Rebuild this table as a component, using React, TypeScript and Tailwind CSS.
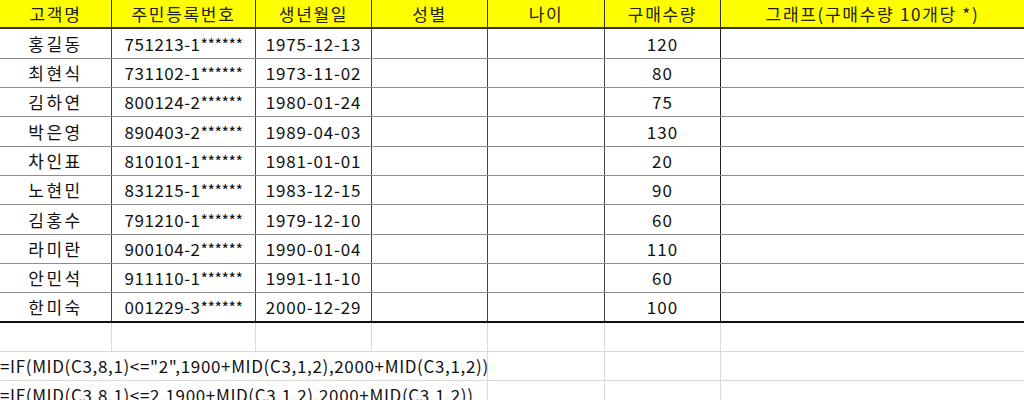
const rows = [
  { name: "홍길동", id: "751213-1", birth: "1975-12-13", qty: "120", tall: true },
  { name: "최현식", id: "731102-1", birth: "1973-11-02", qty: "80", tall: false },
  { name: "김하연", id: "800124-2", birth: "1980-01-24", qty: "75", tall: false },
  { name: "박은영", id: "890403-2", birth: "1989-04-03", qty: "130", tall: true },
  { name: "차인표", id: "810101-1", birth: "1981-01-01", qty: "20", tall: false },
  { name: "노현민", id: "831215-1", birth: "1983-12-15", qty: "90", tall: false },
  { name: "김홍수", id: "791210-1", birth: "1979-12-10", qty: "60", tall: true },
  { name: "라미란", id: "900104-2", birth: "1990-01-04", qty: "110", tall: false },
  { name: "안민석", id: "911110-1", birth: "1991-11-10", qty: "60", tall: false },
  { name: "한미숙", id: "001229-3", birth: "2000-12-29", qty: "100", tall: true },
];

const headers = ["고객명", "주민등록번호", "생년월일", "성별", "나이", "구매수량", "그래프(구매수량 10개당 *)"];

const grid = "grid grid-cols-[112px_144px_116px_116px_117px_116px_1fr]";

const App = () => {
  return (
    <div
      className="w-[1024px] h-[400px] overflow-hidden bg-white text-[17px] text-[#111]"
      style={{ fontFamily: '"Noto Sans CJK KR", "Noto Sans", sans-serif' }}
    >
      {/* header */}
      <div className={`${grid} h-[29px] bg-[#ffff00] border-b-2 border-[#333] text-[#222]`}>
        {headers.map((h, i) => (
          <div
            key={h}
            className={`flex items-center justify-center leading-none tracking-[1.7px] ${i < 6 ? "border-r border-[#333]" : ""}`}
          >
            {h}
          </div>
        ))}
      </div>

      {/* data */}
      {rows.map((r, idx) => (
        <div
          key={r.name}
          className={`${grid} ${r.tall ? "h-[30px]" : "h-[29px]"} ${
            idx === rows.length - 1 ? "border-b-2 border-[#111]" : "border-b border-[#8c8c8c]"
          }`}
        >
          <div className="flex items-center justify-center border-r border-[#444] tracking-[2.5px]">{r.name}</div>
          <div className="flex items-center justify-center border-r border-[#444] tracking-[0.5px]">
            {r.id}
            <span className="tracking-[-0.5px] text-[16px]">******</span>
          </div>
          <div className="flex items-center justify-center border-r border-[#444] tracking-[0.8px]">{r.birth}</div>
          <div className="border-r border-[#444]" />
          <div className="border-r border-[#444]" />
          <div className="flex items-center justify-center border-r border-[#222] tracking-[1px]">{r.qty}</div>
          <div />
        </div>
      ))}

      {/* empty row */}
      <div className={`${grid} h-[29px] border-b border-[#dadada]`}>
        {[0, 1, 2, 3, 4, 5].map((i) => (
          <div key={i} className="border-r border-[#dadada]" />
        ))}
        <div />
      </div>

      {/* formulas */}
      {['=IF(MID(C3,8,1)<="2",1900+MID(C3,1,2),2000+MID(C3,1,2))', "=IF(MID(C3,8,1)<=2,1900+MID(C3,1,2),2000+MID(C3,1,2))"].map(
        (f) => (
          <div key={f} className={`${grid} h-[29px] border-b border-[#dadada]`}>
            <div className="col-span-4 flex items-center whitespace-nowrap border-r border-[#dadada] tracking-[0.65px]">
              {f}
            </div>
            <div className="border-r border-[#dadada]" />
            <div className="border-r border-[#dadada]" />
            <div />
          </div>
        )
      )}
    </div>
  );
};

export default App;
